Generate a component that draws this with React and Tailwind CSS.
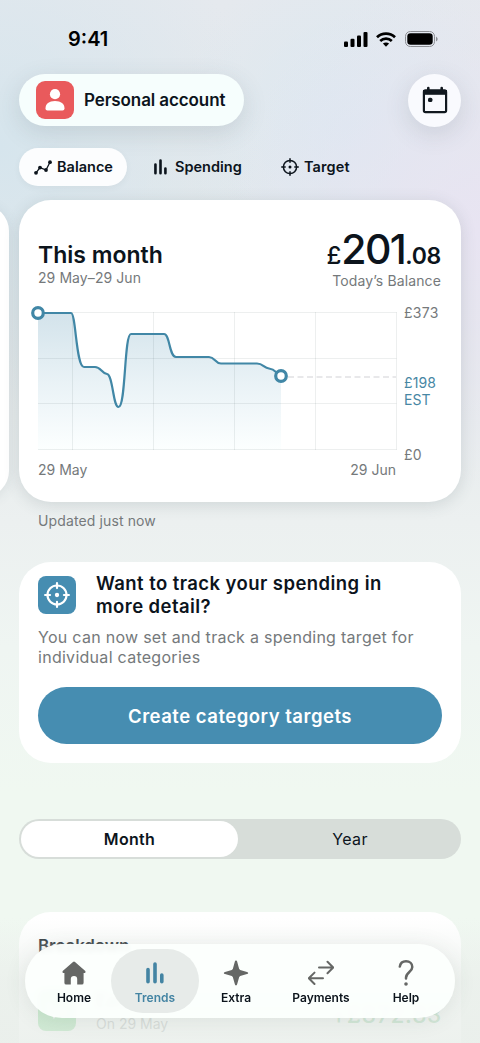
const tabs = [
    { name: "Home", width: "w-[74px]" },
    { name: "Trends", width: "w-[88px]" },
    { name: "Extra", width: "w-[74px]" },
    { name: "Payments", width: "w-[96px]" },
    { name: "Help", width: "w-[74px]" }
];

const Bars = ({ className }) => (
    <svg className={className} viewBox="0 0 18 22" fill="none" stroke="currentColor" strokeWidth="3.6" strokeLinecap="round">
        <path d="M2 7.5V19.7M9 2V19.7M15.8 13V19.7" />
    </svg>
);

const Crosshair = ({ className }) => (
    <svg className={className} viewBox="0 0 24 24" fill="none" stroke="currentColor" strokeWidth="2" strokeLinecap="round">
        <circle cx="12" cy="12" r="8.8" />
        <path d="M12 1V5.6M12 18.4V23M1 12H5.6M18.4 12H23" />
        <circle cx="12" cy="12" r="2" fill="currentColor" stroke="none" />
    </svg>
);

const NavIcon = ({ name }) => {
    if (name === "Trends") return <Bars className="w-[18px] h-[22px]" />;
    return (
        <svg className="w-[26px] h-[26px]" viewBox="0 0 26 26" fill="none" stroke="currentColor" strokeWidth="2" strokeLinecap="round" strokeLinejoin="round">
            {name === "Home" && <path fill="currentColor" stroke="none" d="M12 1.9Q13 1.1 14 1.9L24.3 11Q25.2 12.6 23.8 12.9H22.6V22.7Q22.6 24.6 20.8 24.6H16.2V19Q16.2 16 13 16Q9.8 16 9.8 19V24.6H5.2Q3.4 24.6 3.4 22.7V12.9H2.2Q.8 12.6 1.7 11Z" />}
            {name === "Extra" && <path fill="currentColor" stroke="none" d="M13 .5Q14 .5 14.2 1.8Q15.4 6.5 16.2 9L17.2 10L24 11.9Q25.2 12.2 25.2 13T24 14.1L17.2 16L16.2 17L14.2 24Q14 25.4 13 25.4T11.8 24L9.8 17L8.8 16L2 14.1Q.8 13.8 .8 13T2 11.9L8.8 10L9.8 9L11.8 1.8Q12 .5 13 .5Z" />}
            {name === "Payments" && <path d="M11 7.5H25M19.5 1.8L25.2 7.5L19.5 13.2M15 18.3H1M6.5 12.6L.8 18.3L6.5 24" />}
            {name === "Help" && <>
                <path strokeWidth="2.5" d="M6.8 6.6C7.4 3 10 1.3 13 1.3C16.8 1.3 19.3 3.8 19.3 7C19.3 12 13 12 13 17.8V18.6" />
                <circle cx="13" cy="24" r="1.8" fill="currentColor" stroke="none" />
            </>}
        </svg>
    );
};

const line = "M19 13H52C57 13 57 67 65 67H76C82 67 82 73 88 74C94 75 94 107 99.5 107C107 107 105 34 112 34H145C151 34 150 57 157 57H190C196 57 196 63.5 202 63.5H238C244 63.5 245 68 250 68.5C256 69 257 73 262 76";

const Chart = () => (
    <svg className="w-[380px] h-[156px]" viewBox="0 0 380 156" fill="none">
        <defs>
            <linearGradient id="area" x1="0" y1="0" x2="0" y2="1">
                <stop offset="0" stopColor="#d3e3eb" />
                <stop offset=".5" stopColor="#e9f2f6" />
                <stop offset="1" stopColor="#fcffff" />
            </linearGradient>
        </defs>
        <path d={line + "V150H19Z"} fill="url(#area)" />
        <path d="M19 12.5H377.5M19 58.5H377.5M19 103.5H377.5M19 149.5H377.5M53.5 12V150M134.5 12V150M215.5 12V150M296.5 12V150M377.5 12V150" stroke="#1b3038" strokeOpacity=".08" />
        <path d="M269 77H377" stroke="#e1e1e3" strokeWidth="1.6" strokeDasharray="6 3.5" />
        <path d={line} stroke="#4187a6" strokeWidth="2.2" strokeLinejoin="round" />
        <circle cx="19" cy="13" r="5.3" fill="#fff" stroke="#4187a6" strokeWidth="3.2" />
        <circle cx="262" cy="76" r="5.3" fill="#fff" stroke="#4187a6" strokeWidth="3.2" />
    </svg>
);

const StatusBar = () => (
    <div className="flex justify-between items-center h-[74px] pl-[68px] pr-[42px] pt-[4px] text-black">
        <div className="text-[20px] font-semibold">9:41</div>
        <div className="flex items-center gap-[8px]">
            <svg className="w-6 h-[15px]" viewBox="0 0 24 15" fill="currentColor">
                <rect x="0" y="9.5" width="4" height="5.5" rx="1.1" />
                <rect x="6.5" y="6.8" width="4" height="8.2" rx="1.1" />
                <rect x="13" y="3.6" width="4" height="11.4" rx="1.1" />
                <rect x="19.5" y="0" width="4" height="15" rx="1.1" />
            </svg>
            <svg className="w-[20px] h-[15px]" viewBox="0 0 20 15" fill="none" stroke="currentColor" strokeWidth="2.7">
                <path d="M1 5.3C6 .4 14 .4 19 5.3" />
                <path d="M4.2 8.9C7.5 5.8 12.5 5.8 15.8 8.9" />
                <path d="M10 14.8L6.9 11.6C8.6 10 11.4 10 13.1 11.6Z" fill="currentColor" stroke="none" />
            </svg>
            <svg className="w-[33px] h-4 ml-[1px]" viewBox="0 0 33 16" fill="none">
                <rect x=".5" y=".5" width="29" height="15" rx="4.8" stroke="#8d8f94" />
                <rect x="2.3" y="2.3" width="25.4" height="11.4" rx="3.3" fill="#000" />
                <path d="M31 5.5V10.5Q32.7 9.5 32.7 8T31 5.5Z" fill="#8d8f94" />
            </svg>
        </div>
    </div>
);

const App = () => {
    return (
        <div className="relative w-[480px] h-[1043px] overflow-hidden font-['Inter','Liberation_Sans',sans-serif] text-[#0c141c] bg-[radial-gradient(circle_at_100%_22%,#e8e4f2_0,transparent_260px),radial-gradient(circle_at_0%_14%,#d6e5ed_0,transparent_260px),radial-gradient(circle_at_72%_12%,#dce8f1_0,transparent_170px),linear-gradient(#e5e9ee_0,#e2e8ea_30%,#ecf0f0_50%,#eff5f2_62%,#f0f8f1_76%,#f0f8f1_88%,#eef3ef_100%)]">
            <StatusBar />
            {/* Header */}
            <div className="flex justify-between px-[19px]">
                <div className="flex items-center w-[225px] h-[52px] pl-[17px] rounded-full bg-[#f6fefd] shadow-[0_7px_24px_rgba(60,80,90,0.15)]">
                    <div className="flex items-center justify-center w-[38px] h-[38px] rounded-[9px] bg-[#e95a5c]">
                        <svg className="w-5 h-[22px]" viewBox="0 0 20 22" fill="#fff">
                            <circle cx="10" cy="5.2" r="5.1" />
                            <path d="M.5 19.5C.5 14.8 4 12 10 12S19.5 14.8 19.5 19.5Q19.5 21.5 17.6 21.5H2.4Q.5 21.5 .5 19.5Z" />
                        </svg>
                    </div>
                    <div className="ml-[10px] pt-[2px] text-[17px] font-semibold tracking-[-0.1px] whitespace-nowrap">Personal account</div>
                </div>
                <div className="flex items-center justify-center w-[53px] h-[53px] rounded-full bg-[#f9fafe] shadow-[0_7px_24px_rgba(60,80,90,0.15)]">
                    <svg className="w-[26px] h-[28px] -mt-[2px]" viewBox="0 0 26 28" fill="none">
                        <rect x="1.9" y="4.3" width="22.2" height="21.9" rx="1.6" stroke="#11181f" strokeWidth="2.2" />
                        <path d="M1 4H25V8.8H1Z" fill="#11181f" />
                        <path d="M6.3 2V5M19.7 2V5" stroke="#11181f" strokeWidth="2.6" strokeLinecap="round" />
                        <rect x="6" y="11.7" width="4.4" height="4.4" rx="1.6" fill="#11181f" />
                    </svg>
                </div>
            </div>
            {/* Tabs */}
            <div className="flex items-center mt-[21px] pl-[19px] text-[14.5px] font-semibold">
                <div className="flex items-center w-[108px] h-[38px] pl-[15px] rounded-full bg-[#fcfdfe] shadow-[0_2px_6px_rgba(60,80,90,0.06)]">
                    <svg className="w-[18px] h-[15px]" viewBox="0 0 18 15" fill="currentColor">
                        <path d="M2 12.8L6 7.6L12 10L16 2.2" fill="none" stroke="currentColor" strokeWidth="1.3" />
                        <circle cx="2" cy="12.8" r="1.9" /><circle cx="6" cy="7.6" r="1.9" /><circle cx="12" cy="10" r="1.9" /><circle cx="16" cy="2.2" r="1.9" />
                    </svg>
                    <span className="ml-[5px]">Balance</span>
                </div>
                <div className="flex items-center w-[127px] pl-[27px]">
                    <Bars className="w-[13px] h-[16px]" />
                    <span className="ml-[8px]">Spending</span>
                </div>
                <div className="flex items-center pl-[27px]">
                    <Crosshair className="w-[18px] h-[18px]" />
                    <span className="ml-[5px] tracking-[0.1px]">Target</span>
                </div>
            </div>
            {/* Balance cards */}
            <div className="flex items-center gap-[10px] mt-[14px] -ml-[31px]">
                <div className="w-[40px] h-[292px] rounded-r-[26px] bg-white shrink-0 shadow-[0_2px_14px_rgba(60,80,90,0.1)]"></div>
                <div className="w-[442px] h-[301.5px] rounded-[32px] bg-white shrink-0 shadow-[0_3px_16px_rgba(60,80,90,0.16)]">
                    <div className="flex justify-between h-[100px] px-[19px] pt-[30px]">
                        <div className="pt-[10.5px]">
                            <div className="text-[23px] leading-[28px] font-semibold">This month</div>
                            <div className="text-[14px] leading-[18px] tracking-[0.08px] text-[#75797b]">29 May–29 Jun</div>
                        </div>
                        <div className="mr-px text-right">
                            <div className="text-[41px] leading-[38px] font-medium tracking-[-1.6px]"><span className="text-[24px] tracking-normal">£</span>201<span className="text-[23px] font-semibold tracking-[-0.3px]">.08</span></div>
                            <div className="-mt-[4px] text-[14px] leading-[20px] tracking-[0.12px] text-[#75797b]">Today’s Balance</div>
                        </div>
                    </div>
                    <div className="flex">
                        <Chart />
                        <div className="flex flex-col pl-[5px] text-[14px] leading-[17px] text-[#75797b]">
                            <div className="mt-[4px] tracking-[0.3px]">£373</div>
                            <div className="mt-[53px] w-[36px] tracking-[0.1px] text-[#4787a4]">£198 EST</div>
                            <div className="mt-[38px] tracking-[0.3px]">£0</div>
                        </div>
                    </div>
                    <div className="flex justify-between w-[396px] pl-[19px] pr-[19px] -mt-[2px] text-[14px] leading-[18px] text-[#75797b]">
                        <div>29 May</div>
                        <div>29 Jun</div>
                    </div>
                </div>
            </div>
            <div className="mt-[9.5px] ml-[38px] text-[14px] leading-[20px] tracking-[0.12px] text-[#75797b]">Updated just now</div>
            {/* Category targets */}
            <div className="mx-[19px] mt-[31px] h-[201px] px-[19px] pt-[10px] rounded-[32px] bg-white">
                <div className="flex">
                    <div className="flex items-center justify-center w-[38px] h-[38px] mt-[4px] rounded-[8px] bg-[#468db1] text-white">
                        <Crosshair className="w-[26px] h-[26px]" />
                    </div>
                    <div className="ml-[20px] text-[18.5px] leading-[23px] font-semibold tracking-[0.43px] whitespace-nowrap">Want to track your spending in<br />more detail?</div>
                </div>
                <div className="mt-[10px] text-[16px] leading-[19.5px] tracking-[0.28px] text-[#75797b] whitespace-nowrap">You can now set and track a spending target for<br />individual categories</div>
                <button className="mt-[20px] w-[404px] h-[57px] pt-[2px] rounded-full bg-[#468db1] text-white text-[18.5px] font-semibold tracking-[0.5px]">Create category targets</button>
            </div>
            {/* Month / Year */}
            <div className="flex mx-[19px] mt-[56px] h-[40px] p-[2px] rounded-full bg-[#d7ddd9] text-[16px]">
                <div className="flex items-center justify-center w-[217px] rounded-full bg-white font-semibold tracking-[0.3px]">Month</div>
                <div className="flex items-center justify-center grow pl-[3px] tracking-[0.4px]">Year</div>
            </div>
            {/* Breakdown */}
            <div className="mx-[19px] mt-[53px] h-[180px] px-[19px] pt-[22px] rounded-t-[32px] bg-white">
                <div className="text-[17px] leading-[24px] font-semibold tracking-[-0.1px]">Breakdown</div>
                <div className="flex mt-[32px]">
                    <div className="flex items-center justify-center w-[38px] h-[41px] rounded-[8px] bg-[#5fce70]">
                        <svg className="w-6 h-6" viewBox="0 0 24 24" fill="none" stroke="#fff" strokeWidth="2">
                            <path d="M3 4L9 18L13 11L21 14" />
                        </svg>
                    </div>
                    <div className="ml-[20px] grow">
                        <div className="text-[17px] leading-[22px] font-semibold">Earnings</div>
                        <div className="text-[14px] leading-[23px] text-[#8b8f90]">On 29 May</div>
                    </div>
                    <div className="mt-[11px] text-[22.5px] leading-[28px] font-medium tracking-[0.8px] text-[#74c086]">+£872.83</div>
                </div>
            </div>
            <div className="absolute left-0 bottom-0 w-full h-[125px] bg-linear-to-b from-[#eaefeb]/0 via-[#eaefeb]/70 to-[#eaefeb]/85"></div>
            {/* Bottom nav */}
            <div className="absolute left-[25px] bottom-[25px] flex items-center w-[430px] h-[74px] pl-[12px] rounded-full bg-[#fcfffd]/94 backdrop-blur-[2px] shadow-[0_2px_22px_rgba(60,80,70,0.1)] text-[12px] font-semibold">
                {
                    tabs.map((tab) => (
                        <div key={tab.name} className={tab.width + " flex flex-col items-center h-[64px] pt-[10px] rounded-full " + (tab.name === "Trends" ? "bg-[#e7ebe9] text-[#4484a3]" : "")}>
                            <div className={"flex items-center justify-center h-[28px] " + (tab.name === "Trends" ? "" : "text-[#656765]")}><NavIcon name={tab.name} /></div>
                            <div className="mt-[3px] leading-[16px]">{tab.name}</div>
                        </div>
                    ))
                }
            </div>
        </div>
    );
};

export default App;
